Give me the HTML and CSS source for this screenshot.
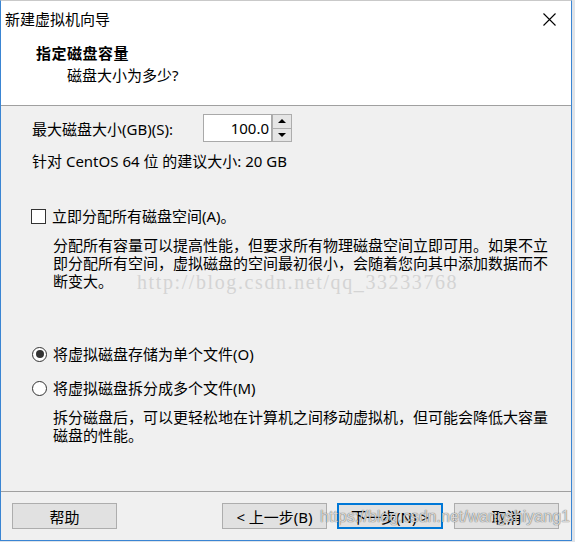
FILE: index.html
```html
<!DOCTYPE html>
<html lang="zh-CN">

<head>
    <meta charset="UTF-8">
    <meta name="viewport" content="width=device-width, initial-scale=1.0">
    <title>新建虚拟机向导</title>
    <link rel="stylesheet" href="styles.css">
</head>

<body>
    <div class="window">
        <div class="titlebar">
            <span class="title">新建虚拟机向导</span>
            <svg class="close" width="13" height="13" viewBox="0 0 13 13">
                <path d="M0.5 0.5 L12.5 12.5 M12.5 0.5 L0.5 12.5" stroke="#000" stroke-width="1.1" fill="none"/>
            </svg>
        </div>

        <div class="header">
            <div class="header-title">指定磁盘容量</div>
            <div class="header-sub">磁盘大小为多少?</div>
        </div>

        <div class="content">
            <div class="size-row">
                <label class="size-label" for="diskSize">最大磁盘大小(GB)(S):</label>
                <div class="spinner">
                    <div class="spin-value" id="diskSize">100.0</div>
                    <div class="spin-btns">
                        <span class="spin-btn"><span class="arrow-up"></span></span>
                        <span class="spin-btn"><span class="arrow-down"></span></span>
                    </div>
                </div>
            </div>

            <div class="hint">针对 CentOS 64 位 的建议大小: 20 GB</div>

            <div class="option check-option">
                <span class="checkbox"></span>
                <span>立即分配所有磁盘空间(A)。</span>
            </div>
            <p class="desc">分配所有容量可以提高性能，但要求所有物理磁盘空间立即可用。如果不立<br>即分配所有空间，虚拟磁盘的空间最初很小，会随着您向其中添加数据而不<br>断变大。</p>

            <div class="option radio-first">
                <span class="radio checked"></span>
                <span>将虚拟磁盘存储为单个文件(O)</span>
            </div>
            <div class="option radio-second">
                <span class="radio"></span>
                <span>将虚拟磁盘拆分成多个文件(M)</span>
            </div>
            <p class="desc">拆分磁盘后，可以更轻松地在计算机之间移动虚拟机，但可能会降低大容量<br>磁盘的性能。</p>
        </div>

        <div class="footer">
            <button class="btn btn-help">帮助</button>
            <button class="btn">&lt; 上一步(B)</button>
            <button class="btn btn-default">下一步(N) &gt;</button>
            <button class="btn">取消</button>
        </div>

        <!-- watermarks from the original capture -->
        <div class="watermark wm-blog">http://blog.csdn.net/qq_33233768</div>
        <div class="watermark wm-footer">https://blog.csdn.net/wangshiyang1</div>
    </div>
</body>

</html>
```

FILE: styles.css
```css
* {
    margin: 0;
    padding: 0;
    box-sizing: border-box;
}

body {
    background: #dfe3e8;
    font-family: "Noto Sans", "Noto Sans CJK SC", sans-serif;
    font-size: 15px;
    color: #000;
}

.window {
    position: relative;
    width: 572px;
    height: 541px;
    background: #f0f0f0;
    border: 1px solid #3a85d3;
    border-top-color: #c9c9c9;
    display: flex;
    flex-direction: column;
    overflow: hidden;
}

.titlebar {
    height: 36px;
    background: #fff;
    display: flex;
    align-items: center;
    justify-content: space-between;
    padding: 0 15px 0 4px;
}

.title {
    line-height: 20px;
}

.header {
    height: 69px;
    background: #fff;
    border-bottom: 1px solid #a0a0a0;
    padding: 6px 0 0 35px;
}

.header-title {
    font-weight: bold;
    line-height: 20px;
    letter-spacing: 0.5px;
}

.header-sub {
    margin-top: 2px;
    padding-left: 31px;
    line-height: 20px;
}

.content {
    padding: 8px 0 0 31px;
}

.size-row {
    display: flex;
    align-items: center;
    height: 28px;
}

.size-label {
    width: 171px;
}

.spinner {
    display: flex;
    height: 28px;
}

.spin-value {
    width: 69px;
    background: #fff;
    border: 1px solid #a9a9a9;
    text-align: right;
    padding-right: 2px;
    line-height: 26px;
}

.spin-btns {
    display: flex;
    flex-direction: column;
    width: 20px;
}

.spin-btn {
    flex: 1;
    background: #e5e5e5;
    border: 1px solid #adadad;
    display: flex;
    align-items: center;
    justify-content: center;
}

.spin-btn + .spin-btn {
    border-top: none;
}

.arrow-up {
    border-left: 4px solid transparent;
    border-right: 4px solid transparent;
    border-bottom: 4px solid #000;
}

.arrow-down {
    border-left: 4px solid transparent;
    border-right: 4px solid transparent;
    border-top: 4px solid #000;
}

.hint {
    margin-top: 9px;
    line-height: 20px;
}

.option {
    display: flex;
    align-items: center;
    gap: 6px;
    line-height: 20px;
}

.check-option {
    margin-top: 35px;
}

.radio-first {
    margin-top: 54px;
}

.radio-second {
    margin-top: 14px;
}

.checkbox {
    width: 15px;
    height: 15px;
    background: #fff;
    border: 1px solid #333;
    margin-left: -1px;
}

.radio {
    width: 15px;
    height: 15px;
    background: #fff;
    border: 1px solid #333;
    border-radius: 50%;
    display: flex;
    align-items: center;
    justify-content: center;
}

.radio.checked::after {
    content: "";
    width: 8px;
    height: 8px;
    border-radius: 50%;
    background: #333;
}

.desc {
    margin-top: 10px;
    padding-left: 21px;
    line-height: 18px;
}

.footer {
    margin-top: auto;
    border-top: 1px solid #a0a0a0;
    padding: 11px 12px 11px 11px;
    display: flex;
    gap: 10px;
}

.btn {
    width: 105px;
    height: 26px;
    background: #e1e1e1;
    border: 1px solid #adadad;
    font-family: inherit;
    font-size: 15px;
    color: #000;
}

.btn-help {
    margin-right: auto;
}

.btn-default {
    border: 2px solid #0078d7;
    width: 106px;
}

.btn-default + .btn {
    margin-left: 1px;
}

.watermark {
    position: absolute;
    white-space: nowrap;
    pointer-events: none;
}

.wm-blog {
    left: 136px;
    top: 270px;
    font-family: "Liberation Serif", serif;
    font-size: 20px;
    letter-spacing: 1.6px;
    color: #d4d4d4;
}

.wm-footer {
    left: 319px;
    top: 507px;
    font-family: "Liberation Sans", sans-serif;
    font-size: 16px;
    color: rgba(255, 255, 255, 0.75);
    text-shadow: 0 0 1px rgba(0, 0, 0, 0.45), 0 0 1px rgba(0, 0, 0, 0.45);
}
```
